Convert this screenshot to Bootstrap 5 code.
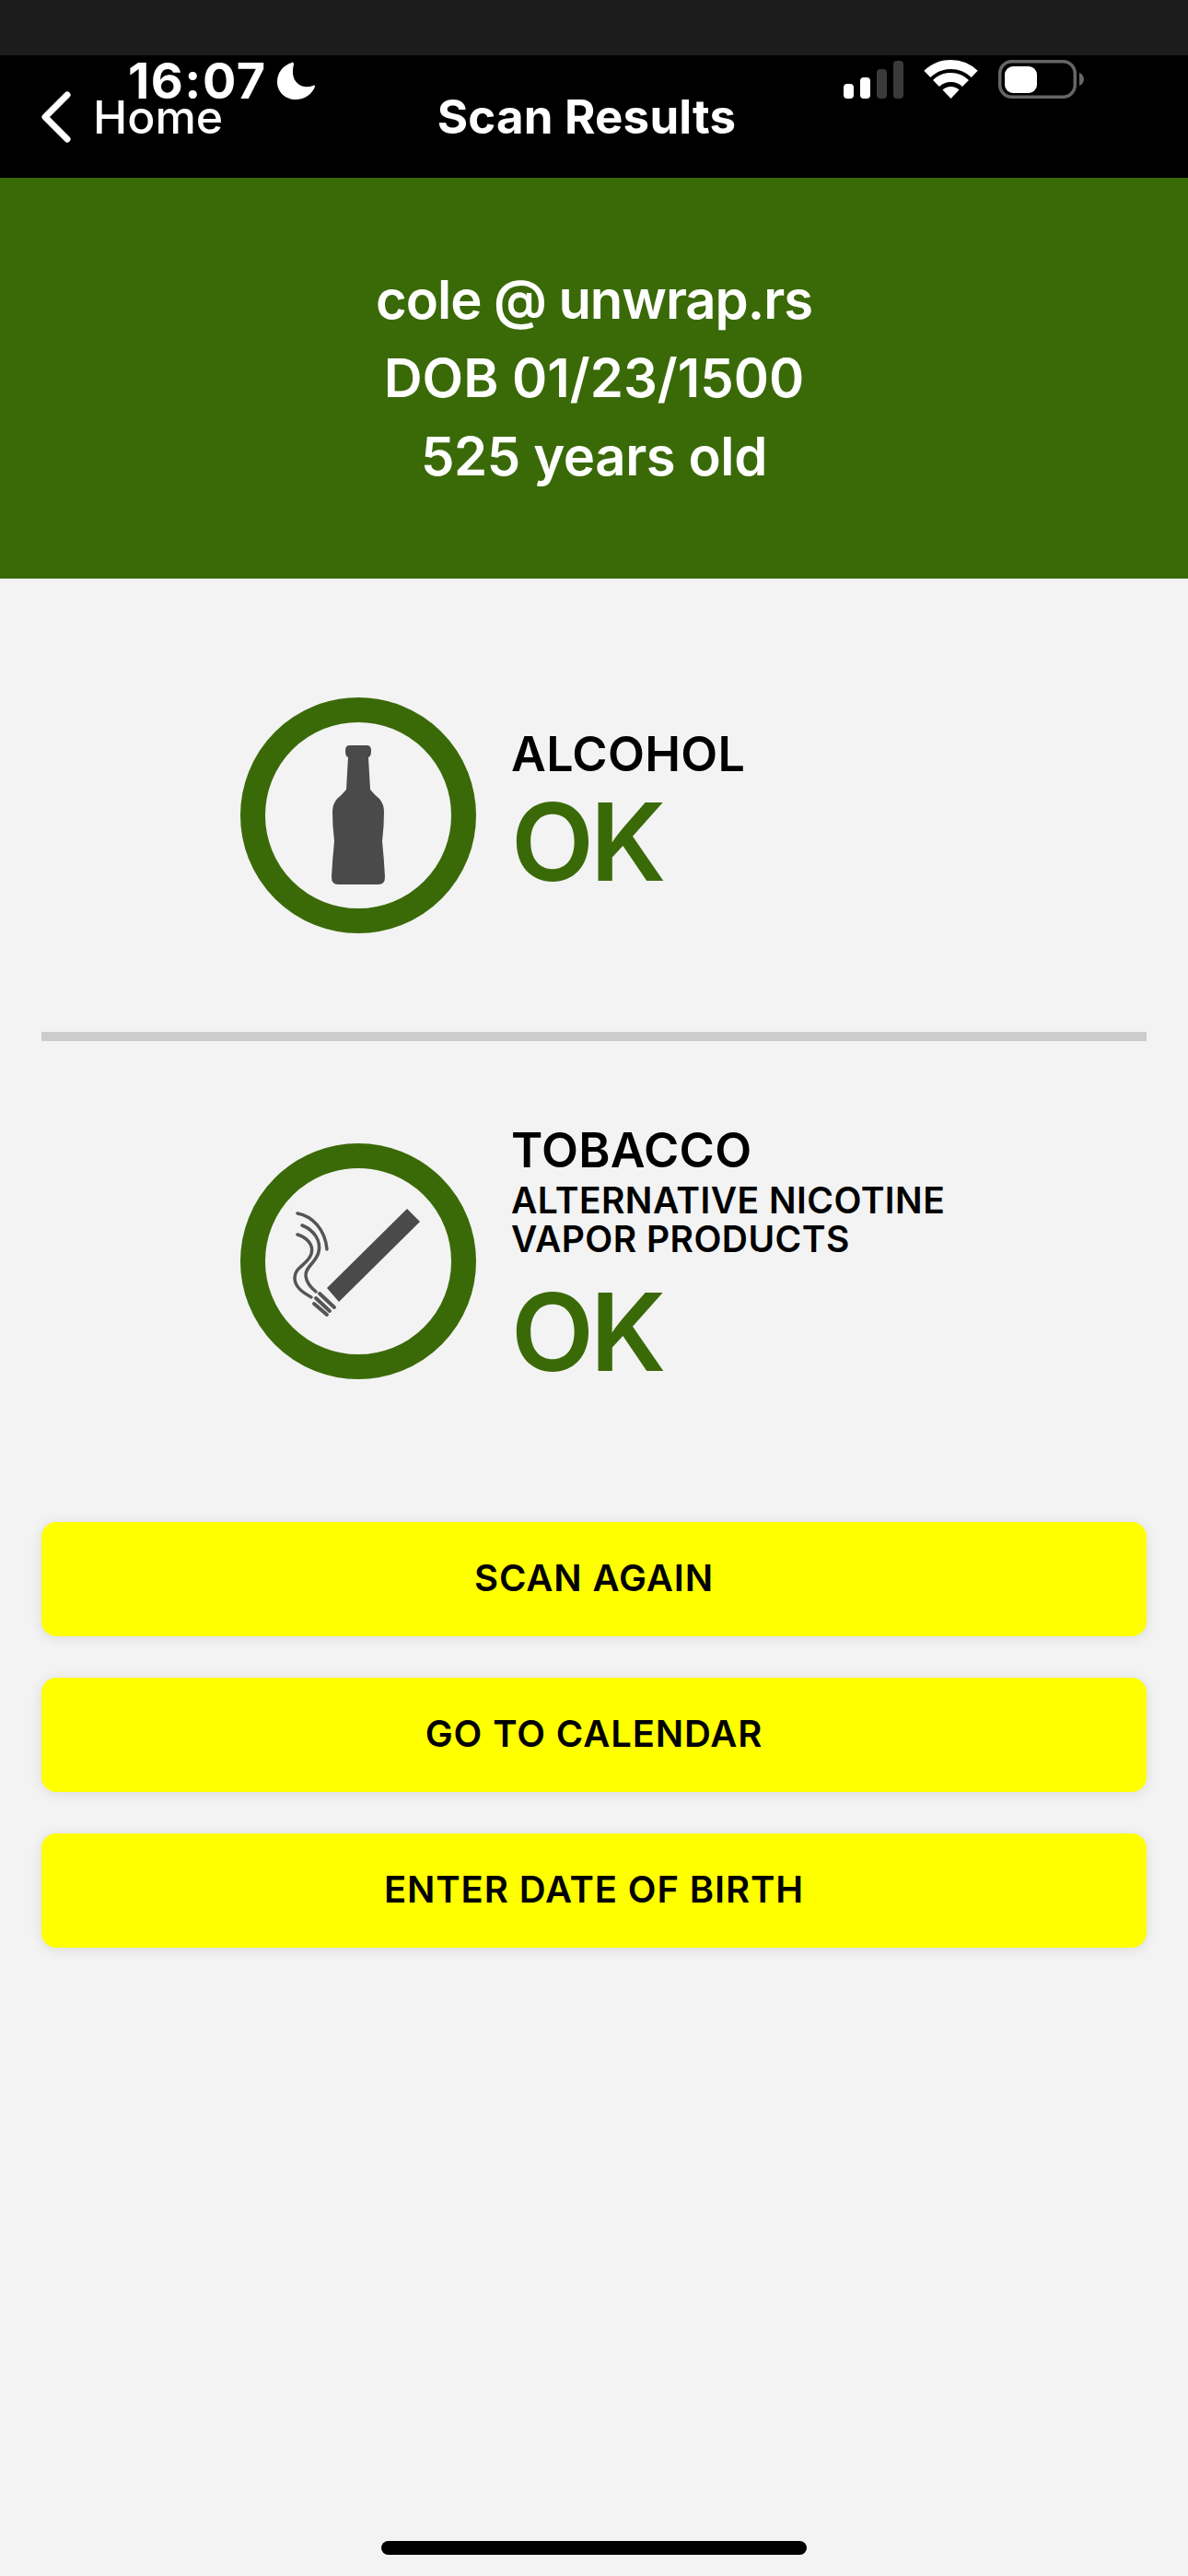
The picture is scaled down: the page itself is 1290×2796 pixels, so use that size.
<!DOCTYPE html>
<html>
<head>
    <title>Scan Results</title>
    <link href="https://cdn.jsdelivr.net/npm/bootstrap@5.3.0/dist/css/bootstrap.min.css" rel="stylesheet">
    <style>
        body { background: #f3f3f3; font-family: Inter, "Liberation Sans", sans-serif; color: #000; }
        .screen { width: 1290px; height: 2796px; overflow: hidden; }
        .top-strip { height: 60px; background: #1c1c1c; flex: none; }
        .head-bar { height: 133px; background: #000; color: #fff; flex: none; }
        .status-time { left: 139px; top: -2px; font-size: 54px; line-height: 60px; font-weight: 700; letter-spacing: 1.5px; }
        .status-moon { left: 301px; top: 7px; }
        .status-icons { left: 912px; top: 4px; }
        .back-link { left: 45px; top: 37px; font-size: 50px; line-height: 60px; font-weight: 500; }
        .back-link svg { margin-right: 24px; }
        .head-title { padding: 37px 16px 0 0; font-size: 51px; line-height: 60px; font-weight: 700; letter-spacing: .2px; }
        .hero-band { height: 435px; background: #3a6a08; color: #fff; font-size: 58px; line-height: 85px; font-weight: 600; flex: none; }
        .hero-handle { letter-spacing: -1.05px; }
        .hero-age { letter-spacing: -.4px; }
        .check-row { padding-left: 261px; gap: 38px; }
        .check-ring { width: 256px; height: 256px; flex: none; }
        .check-alcohol { margin-top: 129px; height: 256px; }
        .check-tobacco { margin-top: 111px; height: 256px; }
        .check-name { font-size: 52px; line-height: 60px; font-weight: 600; letter-spacing: .3px; }
        .check-sub { font-size: 39px; line-height: 42px; font-weight: 600; letter-spacing: .45px; }
        .check-sub-first { margin-top: 3px; }
        .check-ok { font-size: 117px; line-height: 130px; font-weight: 600; color: #3a6a08; letter-spacing: -4px; }
        .check-ok-low { margin-top: 15px; }
        .check-text-high { padding-bottom: 2px; }
        .check-text-low { padding-bottom: 8px; }
        .rule-line { height: 10px; background: #ccc; margin: 107px 45px 0; opacity: 1; border: 0; }
        .btn-stack { padding: 155px 45px 0; gap: 45px; }
        .btn-yellow { height: 124px; background: #ff0; border: 0; border-radius: 16px; color: #000; font-size: 40px; font-weight: 600; letter-spacing: .9px; padding-bottom: 8px; box-shadow: 0 2px 14px rgba(0,0,0,.1); }
        .btn-yellow:hover { background: #ff0; color: #000; }
        .home-pill { width: 462px; height: 15px; background: #000; border-radius: 8px; margin: auto auto 23px; flex: none; }
    </style>
</head>
<body class="m-0">
    <div class="screen d-flex flex-column">
        <div class="top-strip"></div>
        <div class="head-bar position-relative text-center">
            <div class="status-time position-absolute">16:07</div>
            <svg class="status-moon position-absolute" width="42" height="42" viewBox="0 0 42 42"><path d="M16 1C6 4 0 12 0 22C0 33 9 41 20 41C30 41 38 35 41 27C41 26 40 25 39 26C28 30 18 24 17 13C17 9 17 6 18 3C18 1 17 0 16 1Z" fill="#fff"/></svg>
            <svg class="status-icons position-absolute" width="290" height="48" viewBox="0 0 290 48">
                <rect x="4" y="27" width="11" height="16" rx="4" fill="#fff"/>
                <rect x="22" y="20" width="11" height="23" rx="4" fill="#fff"/>
                <rect x="40" y="11" width="11" height="32" rx="4" fill="#3a3a3a"/>
                <rect x="58" y="2" width="11" height="41" rx="4" fill="#3a3a3a"/>
                <path d="M94.8 16.4A37 37 0 0 1 146.2 16.4M104.5 26.5A23 23 0 0 1 136.5 26.5" fill="none" stroke="#fff" stroke-width="10"/>
                <path d="M120.5 43L111.5 33.6A13 13 0 0 1 129.5 33.6Z" fill="#fff"/>
                <rect x="173.75" y="2.75" width="81.5" height="38.5" rx="13" fill="none" stroke="#666" stroke-width="3.5"/>
                <rect x="179" y="8" width="35" height="29" rx="9" fill="#fff"/>
                <path d="M260 15c3 1 5 4 5 7s-2 6-5 7z" fill="#666"/>
            </svg>
            <div class="back-link position-absolute d-flex align-items-center">
                <svg width="32" height="56" viewBox="0 0 32 56"><path d="M28 4L4 28l24 24" fill="none" stroke="#fff" stroke-width="7" stroke-linecap="round" stroke-linejoin="round"/></svg>
                <span>Home</span>
            </div>
            <div class="head-title">Scan Results</div>
        </div>
        <div class="hero-band d-flex flex-column justify-content-center align-items-center">
            <div class="hero-handle">cole @ unwrap.rs</div>
            <div>DOB 01/23/1500</div>
            <div class="hero-age">525 years old</div>
        </div>
        <div class="check-row check-alcohol d-flex align-items-center">
            <svg class="check-ring" viewBox="0 0 256 256">
                <circle cx="128" cy="128" r="114.5" fill="none" stroke="#3a6a08" stroke-width="27"/>
                <path d="M118 52H138Q142 52 142 58Q142 64 139 65L141 100Q146 106 151 110Q156 116 156 124Q156 140 154 156Q156 175 157 195Q157 203 150 203H106Q99 203 99 195Q100 175 102 156Q100 140 100 124Q100 116 105 110Q110 106 115 100L117 65Q114 64 114 58Q114 52 118 52Z" fill="#4a4a4a"/>
            </svg>
            <div class="check-text-high">
                <div class="check-name">ALCOHOL</div>
                <div class="check-ok">OK</div>
            </div>
        </div>
        <hr class="rule-line">
        <div class="check-row check-tobacco d-flex align-items-center">
            <svg class="check-ring" viewBox="0 0 256 256">
                <circle cx="128" cy="128" r="114.5" fill="none" stroke="#3a6a08" stroke-width="27"/>
                <path d="M181 71L195 85L107 172L94 157Z" fill="#4a4a4a"/>
                <g fill="none" stroke="#555" stroke-width="3.5" stroke-linecap="round">
                    <path d="M62 76C78 79 92 93 94 115"/>
                    <path d="M67 89C80 94 88 106 85 118C82 130 70 134 71 144C72 152 77 157 82 161"/>
                    <path d="M62 99C72 102 80 110 77 120C73 132 59 134 59 146C59 156 68 162 77 167"/>
                    <path d="M86 163L102 178M82 168L97 182M80 174L94 186" stroke-width="4"/>
                </g>
            </svg>
            <div class="check-text-low">
                <div class="check-name">TOBACCO</div>
                <div class="check-sub check-sub-first">ALTERNATIVE NICOTINE</div>
                <div class="check-sub">VAPOR PRODUCTS</div>
                <div class="check-ok check-ok-low">OK</div>
            </div>
        </div>
        <div class="btn-stack d-flex flex-column">
            <button class="btn btn-yellow w-100" type="button">SCAN AGAIN</button>
            <button class="btn btn-yellow w-100" type="button">GO TO CALENDAR</button>
            <button class="btn btn-yellow w-100" type="button">ENTER DATE OF BIRTH</button>
        </div>
        <div class="home-pill"></div>
    </div>
    <script src="https://cdn.jsdelivr.net/npm/bootstrap@5.3.0/dist/js/bootstrap.bundle.min.js"></script>
</body>
</html>
